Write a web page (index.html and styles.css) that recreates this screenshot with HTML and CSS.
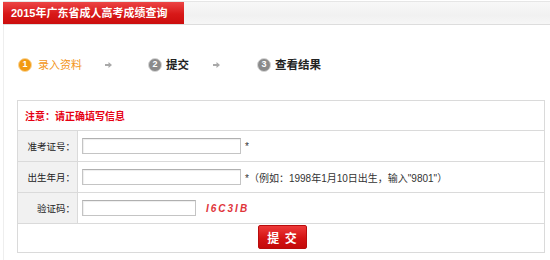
FILE: index.html
```html
<!DOCTYPE html>
<html lang="zh-CN">
<head>
<meta charset="utf-8">
<title>2015年广东省成人高考成绩查询</title>
<link rel="stylesheet" href="styles.css">
</head>
<body>
<div class="header">
  <div class="header-tab">2015年广东省成人高考成绩查询</div>
</div>
<div class="content">
  <div class="steps">
    <div class="step step-active"><span class="num">1</span><span class="step-text">录入资料</span></div>
    <div class="arrow"><svg width="7" height="6" viewBox="0 0 7 6"><path d="M0 2h3.5V0L7 3 3.5 6V4H0z" fill="#a9a9a9"/></svg></div>
    <div class="step"><span class="num">2</span><span class="step-text">提交</span></div>
    <div class="arrow"><svg width="7" height="6" viewBox="0 0 7 6"><path d="M0 2h3.5V0L7 3 3.5 6V4H0z" fill="#a9a9a9"/></svg></div>
    <div class="step"><span class="num">3</span><span class="step-text">查看结果</span></div>
  </div>

  <div class="form">
    <div class="row row-notice">注意：请正确填写信息</div>
    <div class="row">
      <div class="label">准考证号：</div>
      <div class="field"><span class="input"></span><span class="hint">*</span></div>
    </div>
    <div class="row">
      <div class="label">出生年月：</div>
      <div class="field"><span class="input"></span><span class="hint">*（例如：1998年1月10日出生，输入"9801"）</span></div>
    </div>
    <div class="row">
      <div class="label">验证码：</div>
      <div class="field"><span class="input input-short"></span><span class="captcha">I6C3IB</span></div>
    </div>
    <div class="row row-submit">
      <button class="btn" type="button">提 交</button>
    </div>
  </div>
</div>
</body>
</html>
```

FILE: styles.css
```css
* { box-sizing: border-box; }
body {
  margin: 0;
  background: #fff;
  font-family: "Liberation Sans", "Noto Sans CJK SC", sans-serif;
  color: #333;
}
.header {
  margin: 1px 0 0 3px;
  height: 24px;
  border-top: 1px solid #e6e6e6;
  border-bottom: 1px solid #dddddd;
  background: linear-gradient(#f8f8f8, #f1f1f1 60%, #f6f6f6);
  display: flex;
}
.header-tab {
  width: 181px;
  height: 22px;
  line-height: 22px;
  padding-left: 8px;
  background: linear-gradient(#ec4545, #d81818 55%, #cc0d0d);
  color: #fff;
  font-size: 11px;
  font-weight: bold;
  white-space: nowrap;
}
.content {
  margin-left: 3px;
  border-left: 1px solid #eeeeee;
  padding: 33px 0 0 13px;
  height: 235px;
}
.steps {
  margin-left: 1px;
  height: 14px;
  display: grid;
  grid-template-columns: 87px 43px 65px 44px auto;
  align-items: center;
}
.step {
  display: flex;
  align-items: center;
  height: 14px;
}
.num {
  width: 14px;
  height: 14px;
  border-radius: 50%;
  background: #8a8a8a;
  border: 1.5px solid #d6d6d6;
  color: #fff;
  font-size: 9px;
  font-weight: bold;
  line-height: 11px;
  text-align: center;
}
.step-active .num {
  background: #f29a12;
  border-color: #fbd596;
}
.step-text {
  margin-left: 4px;
  font-size: 11.5px;
  font-weight: bold;
  color: #222;
  line-height: 14px;
}
.step-active .step-text {
  margin-left: 6px;
  font-size: 11px;
  color: #f3961a;
  font-weight: normal;
}
.arrow {
  display: flex;
  align-items: center;
  height: 14px;
}
.form {
  margin-top: 28px;
  width: 528px;
  border: 1px solid #dadada;
}
.row {
  display: flex;
  height: 31px;
  border-top: 1px solid #dadada;
  align-items: stretch;
}
.row-notice {
  border-top: 0;
  height: 29px;
  align-items: center;
  padding-left: 7px;
  color: #e60012;
  font-size: 10px;
  font-weight: bold;
}
.label {
  width: 60px;
  background: #f1f1f1;
  border-right: 1px solid #dadada;
  display: flex;
  align-items: center;
  justify-content: flex-end;
  padding-right: 2px;
  font-size: 9.5px;
  color: #222;
}
.field {
  display: flex;
  align-items: center;
  padding-left: 4px;
  font-size: 10px;
  color: #333;
}
.input {
  display: block;
  width: 159px;
  height: 16px;
  background: #fff;
  border: 1px solid #c4c4c4;
  border-top-color: #b0b0b0;
  box-shadow: inset 1px 1px 1px #eeeeee;
}
.input-short { width: 114px; }
.hint {
  margin-left: 4px;
  white-space: nowrap;
}
.captcha {
  margin-left: 10px;
  color: #e0343a;
  font-style: italic;
  font-weight: bold;
  font-size: 10px;
  letter-spacing: 2px;
}
.row-submit {
  height: 29px;
  justify-content: center;
  align-items: flex-start;
  padding-top: 1px;
  padding-left: 3px;
}
.btn {
  width: 49px;
  height: 24px;
  padding: 0;
  border: 1px solid #b80d0d;
  border-radius: 2px;
  background: linear-gradient(#ee3a3a, #d41414 55%, #c40a0a);
  color: #fff;
  font-family: "Liberation Sans", "Noto Sans CJK SC", sans-serif;
  font-size: 12px;
  font-weight: bold;
  letter-spacing: 1px;
}
```
